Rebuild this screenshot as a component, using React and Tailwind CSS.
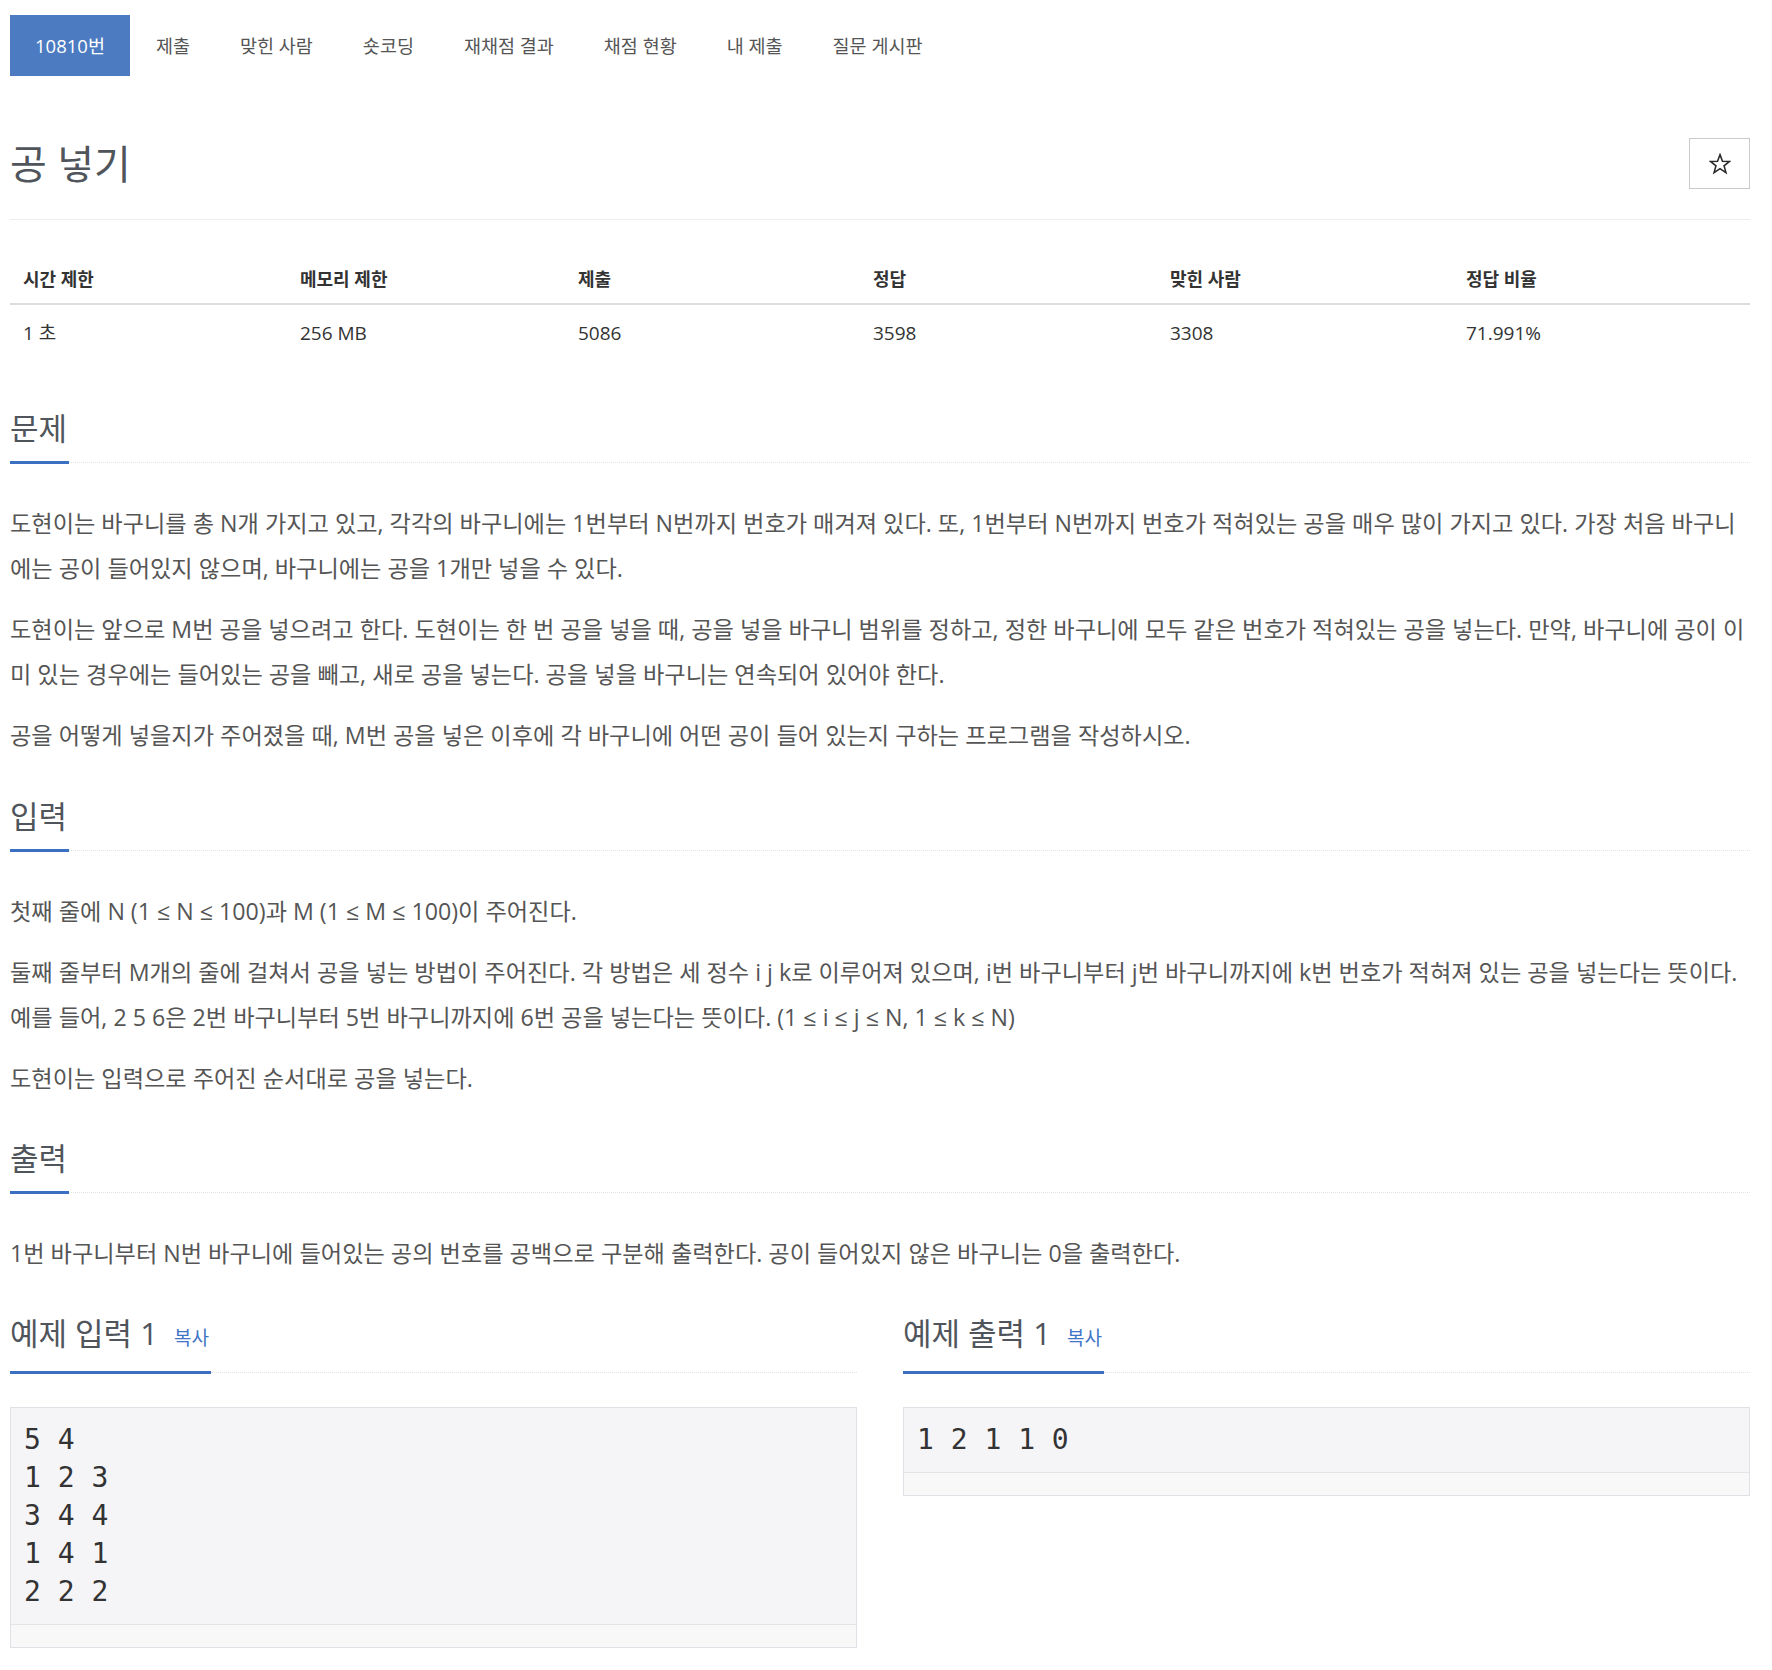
import React from 'react';

const tabs = ['제출', '맞힌 사람', '숏코딩', '재채점 결과', '채점 현황', '내 제출', '질문 게시판'];

const stats = [
  { label: '시간 제한', value: '1 초', w: 'w-[277px]' },
  { label: '메모리 제한', value: '256 MB', w: 'w-[278px]' },
  { label: '제출', value: '5086', w: 'w-[295px]' },
  { label: '정답', value: '3598', w: 'w-[297px]' },
  { label: '맞힌 사람', value: '3308', w: 'w-[296px]' },
  { label: '정답 비율', value: '71.991%', w: 'w-[297px]' },
];

const Headline = ({ children, copy }) => (
  <div className="flex items-end">
    <h2 className="inline-flex items-baseline border-b-[3px] border-[#3b6fc2] pb-[16px] pr-[2px] text-[31px] leading-[33px] font-normal text-[#50555c]">
      {children}
      {copy && <span className="ml-[16px] text-[19px] text-[#3f74c6]">복사</span>}
    </h2>
    <div className="mb-[1px] flex-1 border-b border-dotted border-[#dfe3ea]" />
  </div>
);

const Para = ({ children }) => (
  <p className="mb-[16px] text-[23.2px] leading-[45px] text-[#555]">{children}</p>
);

const Sample = ({ title, lines }) => (
  <div>
    <Headline copy>{title}</Headline>
    <div className="mt-[33px] border border-[#e0e0e6] bg-[#f5f5f7]">
      <pre className="px-[13px] py-[13px] font-['DejaVu_Sans_Mono',monospace] text-[28px] leading-[38px] text-[#333]">
        {lines.join('\n')}
      </pre>
      <div className="h-[23px] border-t border-[#e3e3e8] bg-[#f8f8f9]" />
    </div>
  </div>
);

const StarIcon = () => (
  <svg width="22" height="22" viewBox="0 0 24 24" fill="none">
    <polygon
      points="12,1.8 14.7,8.9 22.4,9.2 16.4,14 18.5,21.4 12,17.1 5.5,21.4 7.6,14 1.6,9.2 9.3,8.9"
      stroke="#2a2a2a"
      strokeWidth="1.7"
      strokeLinejoin="miter"
    />
  </svg>
);

const App = () => {
  return (
    <div className="min-h-screen bg-white font-['Open_Sans','Noto_Sans_CJK_KR',sans-serif]">
      <div className="ml-[10px] w-[1740px] pt-[15px] pb-[20px]">
        <ul className="flex gap-[2px]">
          <li className="flex h-[61px] items-center bg-[#4c7bc1] px-[25px] text-[18.5px] text-white">10810번</li>
          {tabs.map((t) => (
            <li key={t} className="flex h-[61px] items-center px-[24px] text-[18.5px] text-[#555]">
              {t}
            </li>
          ))}
        </ul>

        <div className="flex items-center justify-between border-b border-[#eee] pt-[62px] pb-[30px]">
          <h1 className="text-[40px] leading-[48px] font-normal text-[#50555c]">공 넣기</h1>
          <button className="flex h-[51px] w-[61px] items-center justify-center border border-[#cacaca] bg-white">
            <StarIcon />
          </button>
        </div>

        <div className="mt-[35px]">
          <div className="flex border-b-2 border-[#ddd]">
            {stats.map((s) => (
              <div key={s.label} className={`${s.w} px-[13px] py-[12px] text-[18px] leading-[24px] font-bold text-[#333]`}>
                {s.label}
              </div>
            ))}
          </div>
          <div className="flex">
            {stats.map((s) => (
              <div key={s.label} className={`${s.w} px-[13px] py-[16px] text-[19px] leading-[24px] text-[#333]`}>
                {s.value}
              </div>
            ))}
          </div>
        </div>

        <section className="mt-[51px]">
          <Headline>문제</Headline>
          <div className="mt-[37px]">
            <Para>
              도현이는 바구니를 총 N개 가지고 있고, 각각의 바구니에는 1번부터 N번까지 번호가 매겨져 있다. 또, 1번부터 N번까지 번호가 적혀있는 공을 매우 많이 가지고 있다. 가장 처음 바구니에는 공이 들어있지 않으며, 바구니에는 공을 1개만 넣을 수 있다.
            </Para>
            <Para>
              도현이는 앞으로 M번 공을 넣으려고 한다. 도현이는 한 번 공을 넣을 때, 공을 넣을 바구니 범위를 정하고, 정한 바구니에 모두 같은 번호가 적혀있는 공을 넣는다. 만약, 바구니에 공이 이미 있는 경우에는 들어있는 공을 빼고, 새로 공을 넣는다. 공을 넣을 바구니는 연속되어 있어야 한다.
            </Para>
            <Para>
              공을 어떻게 넣을지가 주어졌을 때, M번 공을 넣은 이후에 각 바구니에 어떤 공이 들어 있는지 구하는 프로그램을 작성하시오.
            </Para>
          </div>
        </section>

        <section className="mt-[42px]">
          <Headline>입력</Headline>
          <div className="mt-[37px]">
            <Para>첫째 줄에 N (1 ≤ N ≤ 100)과 M (1 ≤ M ≤ 100)이 주어진다.</Para>
            <Para>
              둘째 줄부터 M개의 줄에 걸쳐서 공을 넣는 방법이 주어진다. 각 방법은 세 정수 i j k로 이루어져 있으며, i번 바구니부터 j번 바구니까지에 k번 번호가 적혀져 있는 공을 넣는다는 뜻이다. 예를 들어, 2 5 6은 2번 바구니부터 5번 바구니까지에 6번 공을 넣는다는 뜻이다. (1 ≤ i ≤ j ≤ N, 1 ≤ k ≤ N)
            </Para>
            <Para>도현이는 입력으로 주어진 순서대로 공을 넣는다.</Para>
          </div>
        </section>

        <section className="mt-[41px]">
          <Headline>출력</Headline>
          <div className="mt-[37px]">
            <Para>1번 바구니부터 N번 바구니에 들어있는 공의 번호를 공백으로 구분해 출력한다. 공이 들어있지 않은 바구니는 0을 출력한다.</Para>
          </div>
        </section>

        <div className="mt-[41px] grid grid-cols-2 gap-[46px]">
          <Sample title="예제 입력 1" lines={['5 4', '1 2 3', '3 4 4', '1 4 1', '2 2 2']} />
          <div>
            <Sample title="예제 출력 1" lines={['1 2 1 1 0']} />
          </div>
        </div>
      </div>
    </div>
  );
};

export default App;
